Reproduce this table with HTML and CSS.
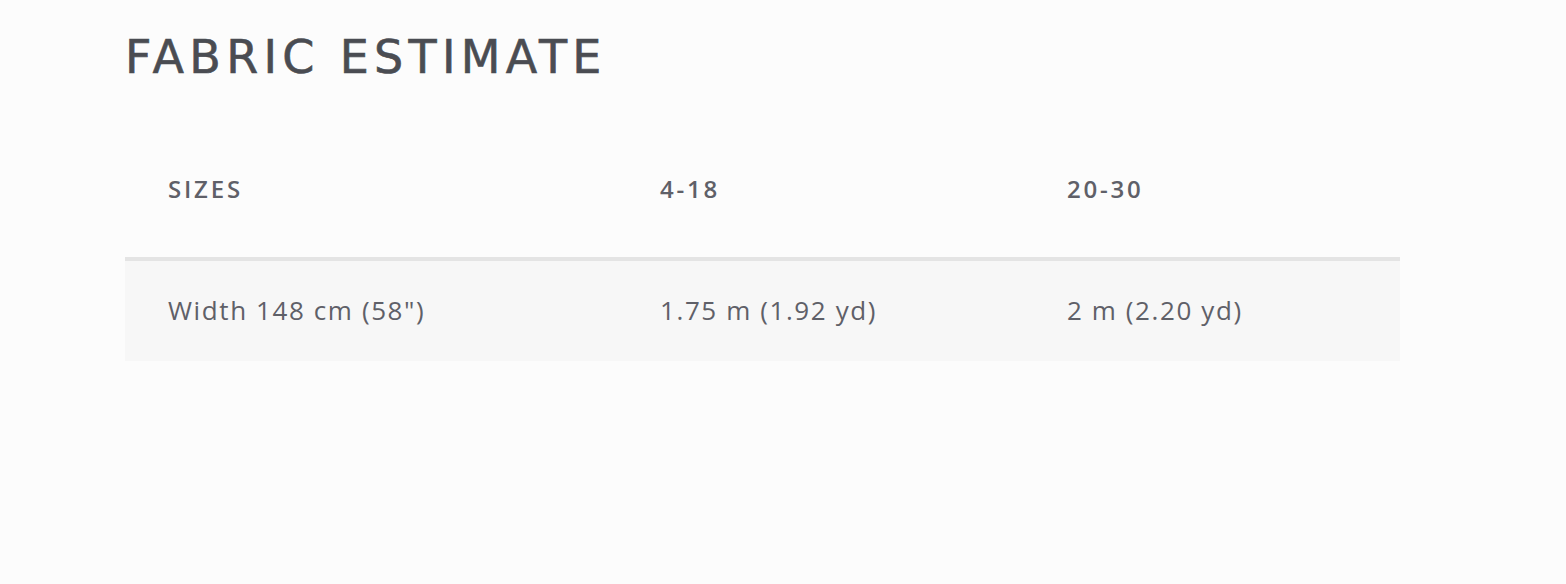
FILE: index.html
```html
<!DOCTYPE html>
<html>
<head>
<meta charset="utf-8">
<link rel="stylesheet" href="styles.css">
</head>
<body>
<section class="fabric">
  <h2 class="title">FABRIC ESTIMATE</h2>
  <div class="table">
    <div class="row head">
      <div class="cell">SIZES</div>
      <div class="cell">4-18</div>
      <div class="cell">20-30</div>
    </div>
    <div class="row body">
      <div class="cell">Width 148 cm (58")</div>
      <div class="cell">1.75 m (1.92 yd)</div>
      <div class="cell">2 m (2.20 yd)</div>
    </div>
  </div>
</section>
</body>
</html>
```

FILE: styles.css
```css
html, body {
  margin: 0;
  padding: 0;
  background: #fcfcfc;
}
body {
  font-family: "Open Sans", "Liberation Sans", sans-serif;
  color: #5f6068;
}
.fabric {
  padding: 29px 0 0 125px;
  width: 1275px;
}
.title {
  margin: 0;
  font-family: "DejaVu Sans", "Noto Sans", sans-serif;
  font-weight: normal;
  font-size: 46px;
  line-height: 56px;
  letter-spacing: 5.3px;
  color: #4a4c52;
  -webkit-text-stroke: 0.6px #4a4c52;
}
.table {
  margin-top: 78px;
  display: flex;
  flex-direction: column;
}
.row {
  display: grid;
  grid-template-columns: 492px 407px 1fr;
  align-items: center;
}
.cell {
  padding-left: 43px;
}
.head {
  box-sizing: content-box;
  height: 50px;
  padding-bottom: 44px;
  border-bottom: 4px solid #e4e4e4;
  font-size: 24px;
  font-weight: 600;
  letter-spacing: 2.8px;
}
.body {
  box-sizing: border-box;
  height: 100px;
  padding-bottom: 3px;
  background: #f7f7f7;
  font-size: 26px;
  letter-spacing: 1.6px;
}
```
